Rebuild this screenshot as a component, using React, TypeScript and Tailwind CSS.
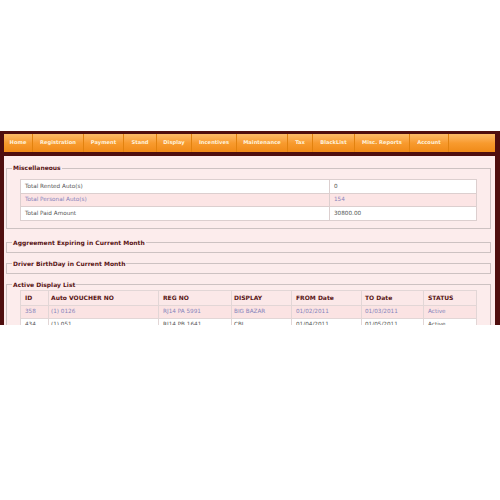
const menu = [
  { label: 'Home', w: 'w-[29px]' },
  { label: 'Registration', w: 'w-[51px]' },
  { label: 'Payment', w: 'w-[40px]' },
  { label: 'Stand', w: 'w-[33px]' },
  { label: 'Display', w: 'w-[35px]' },
  { label: 'Incentives', w: 'w-[45px]' },
  { label: 'Maintenance', w: 'w-[51px]' },
  { label: 'Tax', w: 'w-[25px]' },
  { label: 'BlackList', w: 'w-[42px]' },
  { label: 'Misc. Reports', w: 'w-[55px]' },
  { label: 'Account', w: 'w-[39px]' },
];

const misc = [
  { label: 'Total Rented Auto(s)', value: '0' },
  { label: 'Total Personal Auto(s)', value: '154' },
  { label: 'Total Paid Amount', value: '30800.00' },
];

const displays = [
  { id: '358', voucher: '(1) 0126', reg: 'RJ14 PA 5991', display: 'BIG BAZAR', from: '01/02/2011', to: '01/03/2011', status: 'Active' },
  { id: '434', voucher: '(1) 051', reg: 'RJ14 PB 1641', display: 'CBI', from: '01/04/2011', to: '01/05/2011', status: 'Active' },
];

function Legend({ children }: { children: React.ReactNode }) {
  return (
    <legend className="ml-[5px] px-[1px] text-[6px] font-bold leading-[8px] text-[#581414]">{children}</legend>
  );
}

export default function App() {
  return (
    <div className="w-[500px] h-[500px] bg-white font-['DejaVu_Sans',sans-serif]">
      <div className="pt-[131px]">
        <div className="h-[194px] overflow-hidden bg-[#4f0e0e] pl-[4px] pr-[5px] pt-[3px]">
          {/* Menu */}
          <nav className="flex h-[18px] bg-gradient-to-b from-[#fcbb66] via-[#f89b2e] to-[#f08a16]">
            {menu.map((m) => (
              <div
                key={m.label}
                className={`${m.w} flex items-center justify-center border-r border-[#e2820f] text-[5.2px] font-bold text-[#fff2dc]`}
              >
                {m.label}
              </div>
            ))}
          </nav>

          {/* Content */}
          <div className="mt-[4px] h-[200px] bg-[#fcecec] pl-[2px] pr-[4px] pt-[8px]">
            <fieldset className="border border-[#cdc2c2]">
              <Legend>Miscellaneous</Legend>
              <div className="px-[13px] pt-[7px] pb-[7px]">
                <table className="w-full table-fixed border-collapse text-[5.7px]">
                  <colgroup>
                    <col className="w-[309px]" />
                    <col />
                  </colgroup>
                  <tbody>
                    {misc.map((r, i) => (
                      <tr key={r.label} className={i === 1 ? 'bg-[#fce5e5] text-[#8683bb]' : 'bg-white text-[#555]'}>
                        <td className="h-[13.5px] border border-[#dccfcf] px-[4px]">{r.label}</td>
                        <td className="h-[13.5px] border border-[#dccfcf] px-[4px]">{r.value}</td>
                      </tr>
                    ))}
                  </tbody>
                </table>
              </div>
            </fieldset>

            <fieldset className="mt-[10px] border border-[#cdc2c2]">
              <Legend>Aggreement Expiring in Current Month</Legend>
              <div className="h-[5px]" />
            </fieldset>

            <fieldset className="mt-[7px] border border-[#cdc2c2]">
              <Legend>Driver BirthDay in Current Month</Legend>
              <div className="h-[5px]" />
            </fieldset>

            <fieldset className="mt-[7px] border border-[#cdc2c2]">
              <Legend>Active Display List</Legend>
              <div className="px-[13px] pt-[1px] pb-[9px]">
                <table className="w-full table-fixed border-collapse text-[5.7px]">
                  <colgroup>
                    <col className="w-[28px]" />
                    <col className="w-[110px]" />
                    <col className="w-[73px]" />
                    <col className="w-[60px]" />
                    <col className="w-[70px]" />
                    <col className="w-[62px]" />
                    <col />
                  </colgroup>
                  <thead>
                    <tr className="bg-[#fbe8e8] text-left text-[6px] font-bold text-[#581414]">
                      <th className="h-[15px] border border-[#e2d6d6] px-[4px] font-bold">ID</th>
                      <th className="h-[15px] border border-[#e2d6d6] px-[2px] font-bold">Auto VOUCHER NO</th>
                      <th className="h-[15px] border border-[#e2d6d6] px-[4px] font-bold">REG NO</th>
                      <th className="h-[15px] border border-[#e2d6d6] px-[2px] font-bold">DISPLAY</th>
                      <th className="h-[15px] border border-[#e2d6d6] px-[4px] font-bold">FROM Date</th>
                      <th className="h-[15px] border border-[#e2d6d6] px-[3px] font-bold">TO Date</th>
                      <th className="h-[15px] border border-[#e2d6d6] px-[4px] font-bold">STATUS</th>
                    </tr>
                  </thead>
                  <tbody>
                    {displays.map((d, i) => (
                      <tr key={d.id} className={i === 0 ? 'bg-[#fbe3e3] text-[#8683bb]' : 'bg-white text-[#555]'}>
                        <td className="h-[13px] border border-[#e2d6d6] px-[4px]">{d.id}</td>
                        <td className="h-[13px] border border-[#e2d6d6] px-[2px]">{d.voucher}</td>
                        <td className="h-[13px] border border-[#e2d6d6] px-[4px]">{d.reg}</td>
                        <td className="h-[13px] border border-[#e2d6d6] px-[2px]">{d.display}</td>
                        <td className="h-[13px] border border-[#e2d6d6] px-[4px]">{d.from}</td>
                        <td className="h-[13px] border border-[#e2d6d6] px-[3px]">{d.to}</td>
                        <td className="h-[13px] border border-[#e2d6d6] px-[4px]">{d.status}</td>
                      </tr>
                    ))}
                  </tbody>
                </table>
              </div>
            </fieldset>
          </div>
        </div>
      </div>
    </div>
  );
}
